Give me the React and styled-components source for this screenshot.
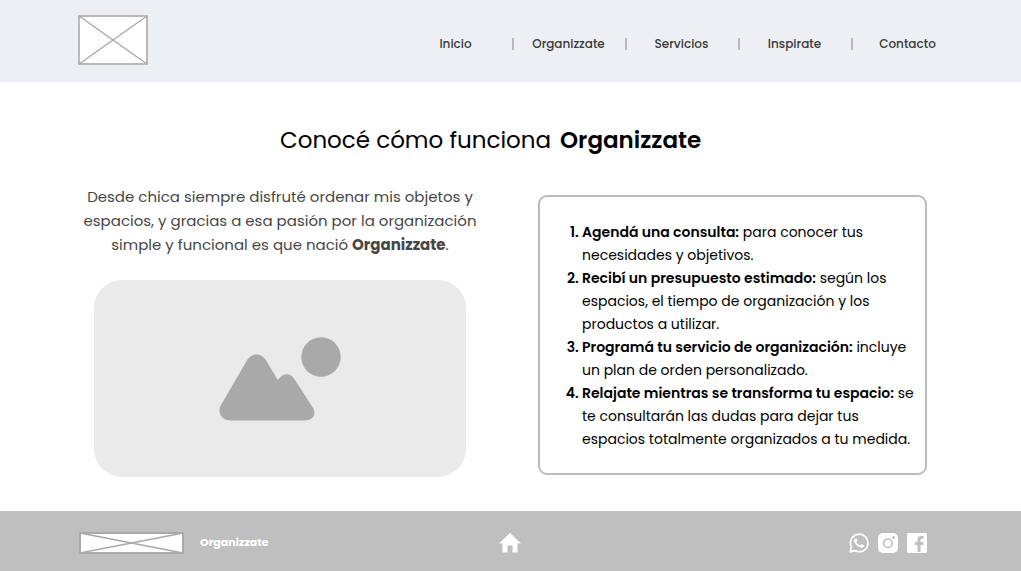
import React from "react";
import styled, { createGlobalStyle } from "styled-components";

const GlobalStyle = createGlobalStyle`
  *, *::before, *::after { box-sizing: border-box; }
  body {
    margin: 0;
    background: #fff;
    color: #000;
    font-family: Poppins, Inter, "Open Sans", sans-serif;
  }
`;

const Page = styled.div`
  display: flex;
  flex-direction: column;
  min-height: 100vh;
`;

const Header = styled.header`
  display: flex;
  align-items: center;
  justify-content: space-between;
  padding: 15px 57px 17px 78px;
  background: #eceff4;
`;

const Placeholder = styled.svg`
  display: block;
  flex: none;
  width: ${(p) => p.$width}px;
  height: ${(p) => p.$height}px;
  fill: #fff;
  stroke: #a9a9a9;
`;

const Nav = styled.nav`
  flex: 0 1 565px;
  padding-top: 8px;
`;

const NavList = styled.ul`
  display: grid;
  grid-template-columns: repeat(5, 1fr);
  margin: 0;
  padding: 0;
  list-style: none;
`;

const NavItem = styled.li`
  display: flex;
  align-items: center;
  justify-content: center;
  height: 12px;

  & + & {
    padding-right: 2px;
    border-left: 2px solid #b8b8b8;
  }
`;

const NavLink = styled.a`
  color: #3a3a3a;
  font-size: 12px;
  font-weight: 500;
  text-decoration: none;
`;

const Main = styled.main`
  flex: 1;
  padding: 40px 94px 34px 78px;
`;

const Title = styled.h1`
  display: flex;
  justify-content: center;
  gap: 9px;
  margin: 0 0 27px;
  padding-right: 24px;
  font-size: 23px;
  font-weight: 400;
  line-height: 36px;
`;

const Strong = styled.strong`
  font-weight: ${(p) => p.$weight || 700};
`;

const Columns = styled.div`
  display: grid;
  grid-template-columns: 404fr 389fr;
  align-items: start;
  gap: 56px;
`;

const Intro = styled.p`
  margin: 0 0 23px;
  color: #464646;
  font-size: 15px;
  line-height: 24px;
  text-align: center;
`;

const Photo = styled.div`
  display: flex;
  align-items: center;
  justify-content: center;
  height: 197px;
  margin: 0 16px;
  border-radius: 28px;
  background: #eaeaea;
`;

const Landscape = styled.svg`
  width: 122px;
  height: 84px;
  fill: #a9a9a9;
`;

const Card = styled.section`
  margin-top: 10px;
  padding: 24px 8px 22px 42px;
  border: 2px solid #bcbcbc;
  border-radius: 9px;
`;

const Steps = styled.ol`
  margin: 0;
  padding: 0;
  font-size: 14px;
  line-height: 23px;
`;

const Step = styled.li`
  &::marker {
    font-weight: 600;
  }
`;

const Footer = styled.footer`
  display: grid;
  grid-template-columns: 1fr auto 1fr;
  align-items: center;
  min-height: 60px;
  padding: 3px 80px 0 79px;
  background: #bfbfbf;
  color: #fff;
`;

const Brand = styled.div`
  display: flex;
  align-items: center;
  gap: 16px;
  font-size: 11px;
  font-weight: 700;
`;

const IconLink = styled.a`
  display: block;
  color: #fff;
`;

const Icon = styled.svg`
  display: block;
  width: ${(p) => p.$size}px;
  height: ${(p) => p.$size}px;
  fill: currentColor;
`;

const Social = styled.div`
  display: flex;
  justify-content: flex-end;
  gap: 9px;
  padding-right: 14px;
`;

const links = ["Inicio", "Organizzate", "Servicios", "Inspirate", "Contacto"];

const steps = [
  ["Agendá una consulta:", "para conocer tus necesidades y objetivos."],
  ["Recibí un presupuesto estimado:", "según los espacios, el tiempo de organización y los productos a utilizar."],
  ["Programá tu servicio de organización:", "incluye un plan de orden personalizado."],
  ["Relajate mientras se transforma tu espacio:", "se te consultarán las dudas para dejar tus espacios totalmente organizados a tu medida."],
];

function CrossedBox({ width, height, frame }) {
  return (
    <Placeholder $width={width} $height={height} viewBox={`0 0 ${width} ${height}`} aria-hidden="true">
      <rect x="1" y="1" width={width - 2} height={height - 2} strokeWidth={frame} />
      <path d={`M1 1L${width - 1} ${height - 1}M${width - 1} 1L1 ${height - 1}`} strokeWidth="1.4" />
    </Placeholder>
  );
}

export default function App() {
  return (
    <>
      <GlobalStyle />
      <Page>
        <Header>
          <CrossedBox width={70} height={50} frame={1.6} />
          <Nav>
            <NavList>
              {links.map((label) => (
                <NavItem key={label}>
                  <NavLink href="#">{label}</NavLink>
                </NavItem>
              ))}
            </NavList>
          </Nav>
        </Header>

        <Main>
          <Title>
            <span>Conocé cómo funciona</span>
            <Strong $weight={600}>Organizzate</Strong>
          </Title>
          <Columns>
            <div>
              <Intro>
                Desde chica siempre disfruté ordenar mis objetos y espacios, y gracias a esa pasión por la
                organización simple y funcional es que nació <Strong>Organizzate</Strong>.
              </Intro>
              <Photo>
                <Landscape viewBox="0 0 122 84" aria-hidden="true">
                  <circle cx="102" cy="20" r="19.7" />
                  <path d="M12 83.5C2 83.5-2 75 2 68L27 25C32 15 43 15 48 25L58.800 43C64 36 71 35 76 43L94 71C98 78 93 83.500 86 83.500Z" />
                </Landscape>
              </Photo>
            </div>
            <Card>
              <Steps>
                {steps.map(([lead, text]) => (
                  <Step key={lead}>
                    <Strong $weight={600}>{lead}</Strong> {text}
                  </Step>
                ))}
              </Steps>
            </Card>
          </Columns>
        </Main>

        <Footer>
          <Brand>
            <CrossedBox width={105} height={22} frame={2} />
            Organizzate
          </Brand>
          <IconLink href="#" aria-label="Inicio">
            <Icon $size={22} viewBox="0 0 22 22">
              <path d="M11 1L0 11.500H3.500V20.500H8.500V13.500H13.500V20.500H18.500V11.500H22Z" />
            </Icon>
          </IconLink>
          <Social>
            <IconLink href="#" aria-label="WhatsApp">
              <Icon $size={20} viewBox="0 0 24 24">
                <path d="M17.472 14.382c-.297-.149-1.758-.867-2.030-.967-.273-.099-.471-.148-.670.150-.197.297-.767.966-.940 1.164-.173.199-.347.223-.644.075-.297-.150-1.255-.463-2.390-1.475-.883-.788-1.480-1.761-1.653-2.059-.173-.297-.018-.458.130-.606.134-.133.298-.347.446-.520.149-.174.198-.298.298-.497.099-.198.050-.371-.025-.520-.075-.149-.669-1.612-.916-2.207-.242-.579-.487-.500-.669-.510-.173-.008-.371-.010-.570-.010-.198 0-.520.074-.792.372-.272.297-1.040 1.016-1.040 2.479 0 1.462 1.065 2.875 1.213 3.074.149.198 2.096 3.200 5.077 4.487.709.306 1.262.489 1.694.625.712.227 1.360.195 1.871.118.571-.085 1.758-.719 2.006-1.413.248-.694.248-1.289.173-1.413-.074-.124-.272-.198-.570-.347" />
                <path
                  d="M1.500 22.600L3 16.900A10.500 10.500 0 1 1 7.100 21.100Z"
                  fill="none"
                  stroke="currentColor"
                  strokeWidth="2"
                  strokeLinejoin="round"
                />
              </Icon>
            </IconLink>
            <IconLink href="#" aria-label="Instagram">
              <Icon $size={20} viewBox="0 0 20 20">
                <rect width="20" height="20" rx="5" />
                <circle cx="9.800" cy="10.200" r="4.200" fill="none" stroke="#bfbfbf" strokeWidth="1.700" />
                <circle cx="15.500" cy="4.500" r="1.400" fill="#bfbfbf" />
              </Icon>
            </IconLink>
            <IconLink href="#" aria-label="Facebook">
              <Icon $size={20} viewBox="0 0 20 20">
                <rect width="20" height="20" rx="1.500" />
                <path
                  fill="#bfbfbf"
                  d="M10.500 19V12H8V9H10.500V7C10.500 4.300 12 3 14.300 3H16.500V5.800H15C13.900 5.800 13.500 6.300 13.500 7.200V9H16.500L16 12H13.500V19Z"
                />
              </Icon>
            </IconLink>
          </Social>
        </Footer>
      </Page>
    </>
  );
}
